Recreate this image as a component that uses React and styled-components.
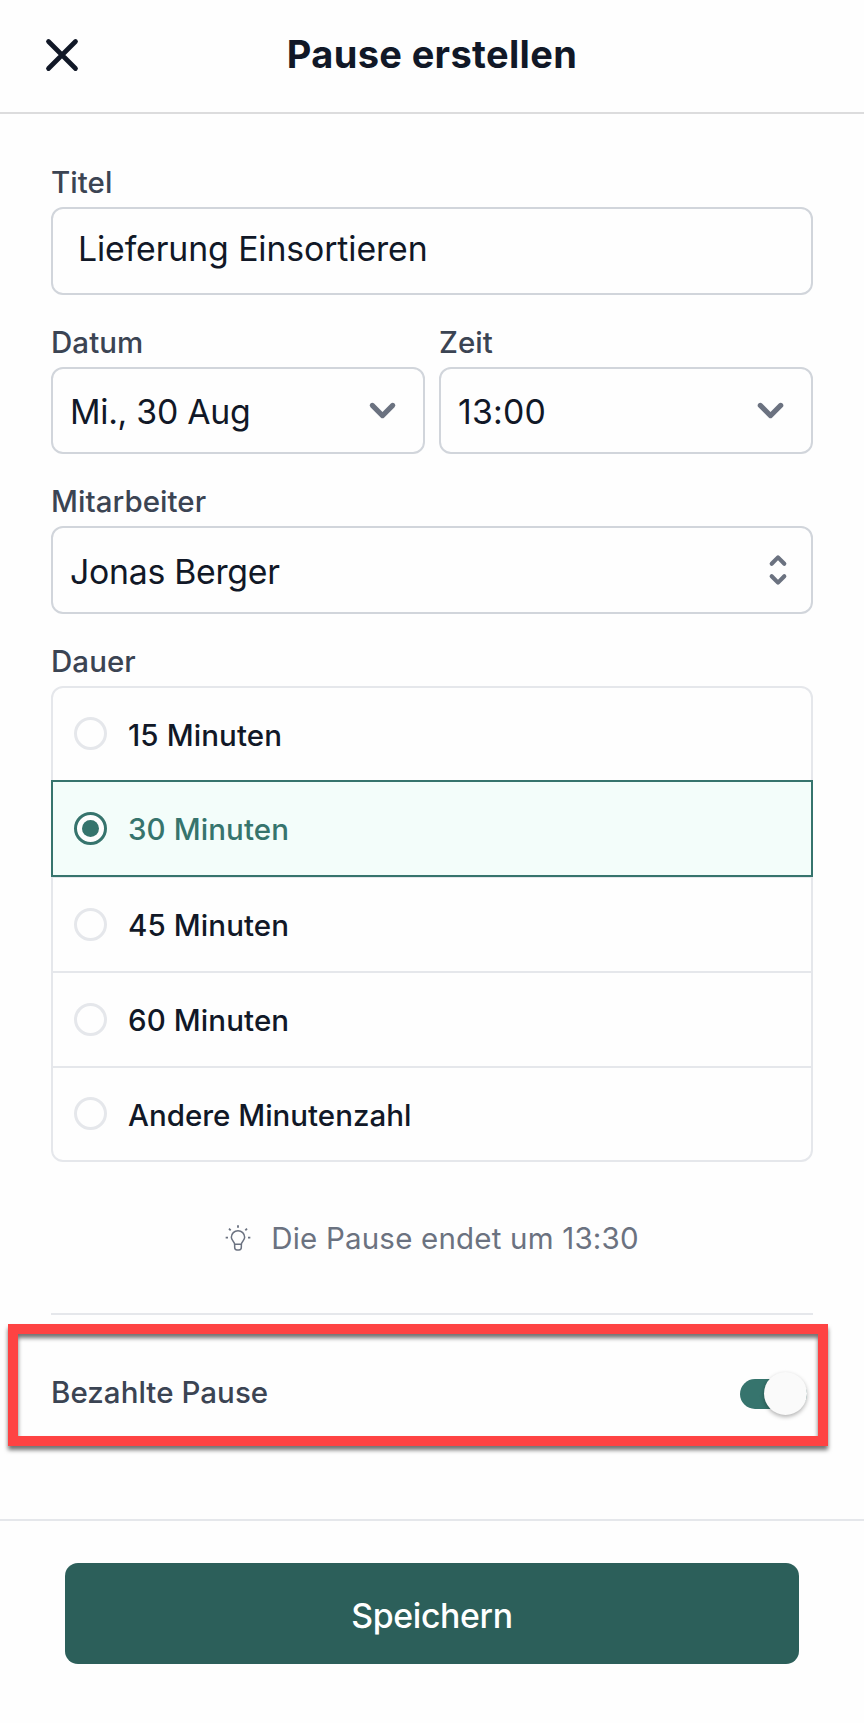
import { useState } from "react"
import { styled, createGlobalStyle } from "styled-components"

const durations = ["15 Minuten", "30 Minuten", "45 Minuten", "60 Minuten", "Andere Minutenzahl"]

const CloseIcon = () => (
    <svg width="54" height="54" viewBox="0 0 24 24" fill="none" stroke="currentColor" strokeWidth="2.1" strokeLinecap="round">
        <path d="M6 18L18 6M6 6l12 12" />
    </svg>
)

const ChevronIcon = () => (
    <svg width="51" height="51" viewBox="0 0 20 20" fill="currentColor">
        <path d="M5.293 7.293a1 1 0 011.414 0L10 10.586l3.293-3.293a1 1 0 111.414 1.414l-4 4a1 1 0 01-1.414 0l-4-4a1 1 0 010-1.414z" />
    </svg>
)

const SelectorIcon = () => (
    <svg width="42" height="42" viewBox="0 0 20 20" fill="currentColor">
        <path d="M10 3a1 1 0 01.707.293l3 3a1 1 0 01-1.414 1.414L10 5.414 7.707 7.707a1 1 0 01-1.414-1.414l3-3A1 1 0 0110 3zm-3.707 9.293a1 1 0 011.414 0L10 14.586l2.293-2.293a1 1 0 011.414 1.414l-3 3a1 1 0 01-1.414 0l-3-3a1 1 0 010-1.414z" />
    </svg>
)

const BulbIcon = () => (
    <svg width="26" height="27" viewBox="0 0 78 81" fill="none" stroke="currentColor" strokeWidth="4.5">
        <path d="M29 58C29 50 19 47 19 37a20 20 0 0140 0C59 47 49 50 49 58z" />
        <path d="M29 57v10q0 8 7 8h6q7 0 7-8V57" />
        <path d="M39 1v7M2 38h7M69 38h7M12 11l5 5M66 11l-5 5" strokeWidth="5.5" />
    </svg>
)

const App = () => {
    const [selected, setSelected] = useState("30 Minuten")
    const [paid, setPaid] = useState(true)

    return (
        <Page>
            <GlobalStyle />
            <Header>
                <CloseButton aria-label="Schließen"><CloseIcon /></CloseButton>
                <h1>Pause erstellen</h1>
            </Header>
            <Main>
                <Field>
                    <Label>Titel</Label>
                    <Box $inset="25px">
                        <Value $raised $spacing="-0.1px">Lieferung Einsortieren</Value>
                    </Box>
                </Field>
                <Columns>
                    <Field>
                        <Label>Datum</Label>
                        <Box $end="15px"><Value>Mi., 30 Aug</Value><ChevronIcon /></Box>
                    </Field>
                    <Field>
                        <Label>Zeit</Label>
                        <Box $end="15px"><Value $spacing="0.2px">13:00</Value><ChevronIcon /></Box>
                    </Field>
                </Columns>
                <Field>
                    <Label>Mitarbeiter</Label>
                    <Box $end="12px"><Value>Jonas Berger</Value><SelectorIcon /></Box>
                </Field>
                <Field>
                    <Label>Dauer</Label>
                    <Options role="radiogroup">
                        {durations.map((item) => (
                            <Option
                                key={item}
                                role="radio"
                                aria-checked={item === selected}
                                $active={item === selected}
                                onClick={() => setSelected(item)}
                            >
                                <Radio $active={item === selected} />
                                <span>{item}</span>
                            </Option>
                        ))}
                    </Options>
                </Field>
                <Hint><BulbIcon /><span>Die Pause endet um 13:30</span></Hint>
                <PaidRow>
                    <Label>Bezahlte Pause</Label>
                    <Switch role="switch" aria-checked={paid} $on={paid} onClick={() => setPaid(!paid)}>
                        <Knob />
                    </Switch>
                    <Highlight />
                </PaidRow>
            </Main>
            <Footer>
                <SaveButton>Speichern</SaveButton>
            </Footer>
        </Page>
    )
}

const GlobalStyle = createGlobalStyle`
    *{
        box-sizing: border-box;
    }
    body{
        margin: 0;
        background-color: #fefefe;
    }
    button{
        font-family: inherit;
        padding: 0;
        border: none;
        background: none;
    }
    svg{
        display: block;
        flex-shrink: 0;
    }
`
const Page = styled.div`
    width: 864px;
    height: 1723px;
    display: flex;
    flex-direction: column;
    overflow: hidden;
    color: #111827;
    font-family: Inter, "Liberation Sans", sans-serif;
`
const Header = styled.header`
    height: 114px;
    padding: 0 35px 2px;
    display: grid;
    grid-template-columns: 54px 1fr 54px;
    align-items: center;
    border-bottom: 2px solid #dcdcdd;
    h1{
        margin: 0 0 3px;
        font-size: 38px;
        font-weight: 700;
        line-height: 48px;
        letter-spacing: 0.35px;
        text-align: center;
    }
`
const CloseButton = styled.button`
    color: #111827;
`
const Main = styled.main`
    height: 1405px;
    padding: 48px 51px 0;
    display: flex;
    flex-direction: column;
`
const Field = styled.div`
    margin-bottom: 27px;
`
const Columns = styled.div`
    display: grid;
    grid-template-columns: 1fr 1fr;
    gap: 14px;
`
const Label = styled.div`
    margin-bottom: 5px;
    font-size: 29.5px;
    font-weight: 500;
    line-height: 40px;
    letter-spacing: 0.05px;
    color: #3b4453;
`
const Box = styled.div`
    height: 87.5px;
    padding: 0 ${({ $end }) => $end || "24px"} 0 ${({ $inset }) => $inset || "17px"};
    display: flex;
    align-items: center;
    justify-content: space-between;
    border: 2px solid #d1d5db;
    border-radius: 12px;
    color: #6b7280;
`
const Value = styled.span`
    padding-top: ${({ $raised }) => ($raised ? "0" : "4px")};
    margin-top: ${({ $raised }) => ($raised ? "-4px" : "0")};
    font-size: 33.8px;
    line-height: 48px;
    letter-spacing: ${({ $spacing }) => $spacing || "-0.28px"};
    color: #111827;
`
const Options = styled.div`
    display: flex;
    flex-direction: column;
`
const Option = styled.div`
    height: 97px;
    margin-top: -2px;
    padding: 0 20px 0 21px;
    display: flex;
    align-items: center;
    gap: 21px;
    border: 2px solid #e5e7eb;
    font-size: 29.5px;
    font-weight: 500;
    line-height: 40px;
    letter-spacing: 0.1px;
    span{
        padding-top: 2px;
    }
    &:first-child{
        height: 96px;
        margin-top: 0;
        border-radius: 12px 12px 0 0;
    }
    &:last-child{
        height: 96px;
        border-radius: 0 0 12px 12px;
        letter-spacing: 0;
    }
    ${({ $active }) => $active && `
        z-index: 1;
        margin-bottom: 1px;
        border-color: #36746d;
        background-color: #f3fdfa;
        color: #36746d;
    `}
`
const Radio = styled.div`
    width: 33px;
    height: 33px;
    display: grid;
    place-items: center;
    border: 3px solid ${({ $active }) => ($active ? "#36746d" : "#e5e7eb")};
    border-radius: 50%;
    background-color: #fefefe;
    &::after{
        content: "";
        width: 17px;
        height: 17px;
        border-radius: 50%;
        background-color: ${({ $active }) => ($active ? "#36746d" : "transparent")};
    }
`
const Hint = styled.div`
    height: 126px;
    padding-bottom: 25px;
    display: flex;
    align-items: center;
    justify-content: center;
    gap: 20px;
    border-bottom: 2px solid #e5e7eb;
    font-size: 29.5px;
    line-height: 40px;
    letter-spacing: 0.2px;
    color: #6b7280;
`
const PaidRow = styled.div`
    position: relative;
    height: 158px;
    padding: 0 6px 0 0;
    display: flex;
    align-items: center;
    justify-content: space-between;
    ${Label}{
        margin-bottom: 4px;
    }
`
const Switch = styled.button`
    width: 67px;
    height: 30px;
    display: flex;
    align-items: center;
    justify-content: ${({ $on }) => ($on ? "flex-end" : "flex-start")};
    background-color: ${({ $on }) => ($on ? "#36746d" : "#d1d5db")};
    border-radius: 15px;
`
const Knob = styled.span`
    width: 43px;
    height: 43px;
    flex-shrink: 0;
    border-radius: 50%;
    background-color: #fafafa;
    box-shadow: 0 2px 4px rgba(0, 0, 0, 0.3);
`
// callout frame drawn over the paid break row
const Highlight = styled.div`
    position: absolute;
    top: 9px;
    left: -43px;
    width: 820px;
    height: 122px;
    border: 10px solid #fe4343;
    filter: drop-shadow(0 4px 2px rgba(0, 0, 0, 0.55));
    pointer-events: none;
`
const Footer = styled.footer`
    flex: 1;
    padding: 42px 65px 0;
    border-top: 2px solid #e5e7eb;
`
const SaveButton = styled.button`
    width: 100%;
    height: 101px;
    padding-top: 3px;
    border-radius: 13px;
    background-color: #2c5f5a;
    color: #fff;
    font-size: 33.8px;
    font-weight: 500;
    letter-spacing: -0.35px;
`
export default App
